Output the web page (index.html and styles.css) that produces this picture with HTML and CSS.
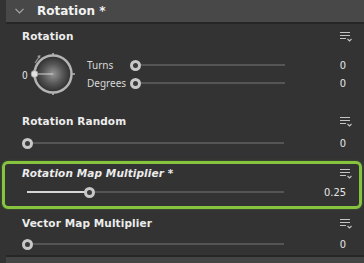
FILE: index.html
```html
<!DOCTYPE html>
<html lang="en">
<head>
  <meta charset="UTF-8">
  <title>Rotation</title>
  <link rel="stylesheet" href="styles.css">
</head>
<body>
  <div class="panel">
    <div class="group-header">
      <svg class="chevron" width="9" height="6" viewBox="0 0 9 6"><path d="M0.5 0.8 L4.5 4.8 L8.5 0.8" fill="none" stroke="#a8a8a8" stroke-width="1.2"/></svg>
      <span class="group-title">Rotation *</span>
    </div>

    <div class="prop prop-rotation">
      <div class="prop-head">
        <span class="prop-label">Rotation</span>
        <svg class="menu-icon" width="12" height="11" viewBox="0 0 12 11"><path d="M0 1.5 H10 M0 4.5 H10 M0 7.5 H6" stroke="#c4c4c4" stroke-width="1.2"/><path d="M7.5 8 L9.5 10 L11.5 8" fill="none" stroke="#c4c4c4" stroke-width="1.1"/></svg>
      </div>
      <div class="dial-row">
        <span class="dial-zero">0</span>
        <svg class="dial" width="50" height="48" viewBox="0 0 50 48">
          <defs>
            <radialGradient id="ball" cx="0.5" cy="0.5" r="0.5">
              <stop offset="0" stop-color="#959595"/>
              <stop offset="0.55" stop-color="#555555"/>
              <stop offset="1" stop-color="#2c2c2c"/>
            </radialGradient>
          </defs>
          <path d="M7 13 L11 7" stroke="#9a9a9a" stroke-width="1.2"/>
          <path d="M9 6 L12.5 5 L12 8.5 Z" fill="#9a9a9a"/>
          <circle cx="25" cy="24" r="18.5" fill="url(#ball)" stroke="#b4b4b4" stroke-width="2.5"/>
          <path d="M25 3 V6 M44 24 H47 M25 42 V45" stroke="#b4b4b4" stroke-width="1.6"/>
          <path d="M6.5 24 H25" stroke="#d8d8d8" stroke-width="1.4" opacity="0.7"/>
          <circle cx="6.5" cy="24" r="3.4" fill="#e0e0e0" stroke="#9a9a9a" stroke-width="0.8"/>
        </svg>
        <div class="dial-fields">
          <div class="field-row">
            <span class="field-name">Turns</span>
            <div class="slider short"><div class="track"></div><div class="knob" style="left:0px"></div></div>
            <span class="value">0</span>
          </div>
          <div class="field-row">
            <span class="field-name">Degrees</span>
            <div class="slider short"><div class="track"></div><div class="knob" style="left:0px"></div></div>
            <span class="value">0</span>
          </div>
        </div>
      </div>
    </div>

    <div class="prop prop-random">
      <div class="prop-head">
        <span class="prop-label">Rotation Random</span>
        <svg class="menu-icon" width="12" height="11" viewBox="0 0 12 11"><path d="M0 1.5 H10 M0 4.5 H10 M0 7.5 H6" stroke="#c4c4c4" stroke-width="1.2"/><path d="M7.5 8 L9.5 10 L11.5 8" fill="none" stroke="#c4c4c4" stroke-width="1.1"/></svg>
      </div>
      <div class="slider-row">
        <div class="slider"><div class="track"></div><div class="knob" style="left:0px"></div></div>
        <span class="value">0</span>
      </div>
    </div>

    <div class="prop prop-active">
      <div class="prop-head">
        <span class="prop-label italic">Rotation Map Multiplier *</span>
        <svg class="menu-icon" width="12" height="11" viewBox="0 0 12 11"><path d="M0 1.5 H10 M0 4.5 H10 M0 7.5 H6" stroke="#c4c4c4" stroke-width="1.2"/><path d="M7.5 8 L9.5 10 L11.5 8" fill="none" stroke="#c4c4c4" stroke-width="1.1"/></svg>
      </div>
      <div class="slider-row">
        <div class="slider"><div class="track"></div><div class="fill" style="width:63px"></div><div class="knob" style="left:62px"></div></div>
        <span class="value">0.25</span>
      </div>
    </div>

    <div class="prop prop-vector">
      <div class="prop-head">
        <span class="prop-label">Vector Map Multiplier</span>
        <svg class="menu-icon" width="12" height="11" viewBox="0 0 12 11"><path d="M0 1.5 H10 M0 4.5 H10 M0 7.5 H6" stroke="#c4c4c4" stroke-width="1.2"/><path d="M7.5 8 L9.5 10 L11.5 8" fill="none" stroke="#c4c4c4" stroke-width="1.1"/></svg>
      </div>
      <div class="slider-row">
        <div class="slider"><div class="track"></div><div class="knob" style="left:0px"></div></div>
        <span class="value">0</span>
      </div>
    </div>

    <div class="next-group"></div>
  </div>
</body>
</html>
```

FILE: styles.css
```css
body {
  margin: 0;
  background: #333333;
  font-family: 'DejaVu Sans', sans-serif;
  color: #e6e6e6;
  width: 364px;
  height: 263px;
  overflow: hidden;
}
.panel {
  display: flex;
  flex-direction: column;
}
.group-header {
  height: 22px;
  margin-left: 6px;
  background: #484848;
  border-bottom: 2px solid #262626;
  display: flex;
  align-items: center;
}
.chevron {
  margin-left: 9px;
  margin-right: 13px;
}
.group-title {
  font-size: 12px;
  font-weight: bold;
  color: #f2f2f2;
}
.prop {
  padding: 0 12px 0 22px;
}
.prop-head {
  height: 24px;
  display: flex;
  align-items: center;
  justify-content: space-between;
}
.prop-label {
  font-size: 10.5px;
  font-weight: bold;
  color: #ececec;
  letter-spacing: 0.1px;
}
.prop-label.italic {
  font-style: italic;
}
.menu-icon {
  display: block;
}
.dial-row {
  height: 52px;
  display: flex;
  align-items: center;
}
.dial-zero {
  font-family: 'DejaVu Sans Condensed', sans-serif;
  font-size: 10px;
  width: 6px;
  margin-top: 2px;
}
.dial {
  display: block;
}
.dial-fields {
  flex: 1;
  margin-left: 9px;
}
.field-row {
  height: 18px;
  display: flex;
  align-items: center;
}
.field-name {
  width: 43px;
  font-family: 'Noto Sans', sans-serif;
  font-size: 10px;
  color: #d8d8d8;
}
.slider {
  position: relative;
  width: 262px;
  height: 11px;
}
.slider.short {
  width: 155px;
}
.track {
  position: absolute;
  left: 5px;
  right: 0;
  top: 4.5px;
  height: 2px;
  background: #555555;
}
.fill {
  position: absolute;
  left: 5px;
  top: 4.5px;
  height: 2px;
  background: #d6d6d6;
}
.knob {
  position: absolute;
  top: 0;
  width: 5px;
  height: 5px;
  border: 3px solid #c8c8c8;
  border-radius: 50%;
  background: #3a3a3a;
}
.slider-row {
  height: 20px;
  display: flex;
  align-items: center;
}
.value {
  flex: 1;
  text-align: right;
  margin-right: 6px;
  font-family: 'DejaVu Sans Condensed', sans-serif;
  font-size: 11px;
  color: #e6e6e6;
}
.prop-random {
  margin-top: 9px;
}
.prop-active {
  margin: 8px 2px 0 2px;
  padding: 0 7px 4px 17px;
  border: 3px solid #86c440;
  border-radius: 6px;
  box-shadow: 0 0 2px #4a7a22;
}
.prop-active .prop-head {
  height: 18px;
}
.prop-vector {
  margin-top: 3px;
}
.prop-vector .prop-head {
  height: 22px;
}
.next-group {
  margin-top: 1px;
  margin-left: 6px;
  height: 10px;
  border-top: 2px solid #262626;
  background: #444444;
}
```
